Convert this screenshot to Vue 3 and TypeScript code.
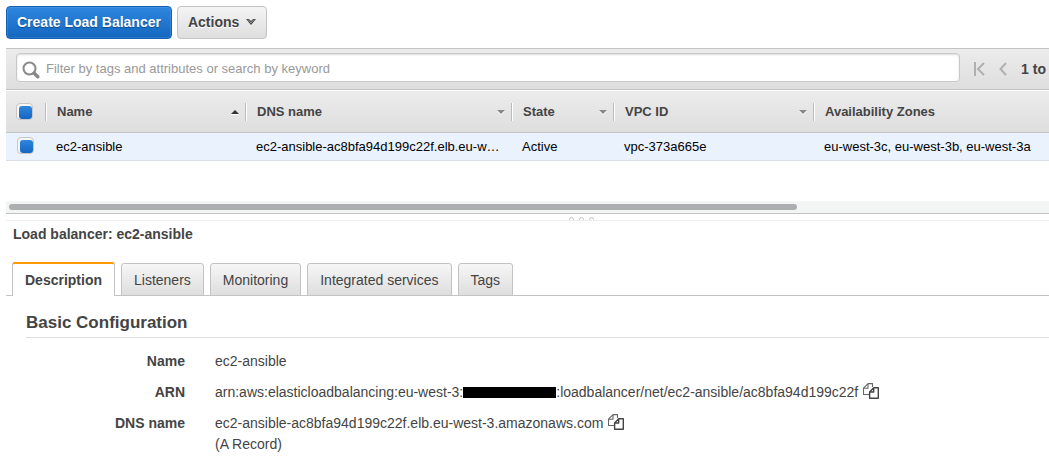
<script setup lang="ts">
import { ref } from 'vue'

interface Column {
  key: string
  label: string
  sort: 'asc' | 'none' | null
}

const columns: Column[] = [
  { key: 'name', label: 'Name', sort: 'asc' },
  { key: 'dns', label: 'DNS name', sort: 'none' },
  { key: 'state', label: 'State', sort: 'none' },
  { key: 'vpc', label: 'VPC ID', sort: 'none' },
  { key: 'zones', label: 'Availability Zones', sort: null },
]

const rows: Record<string, string>[] = [
  {
    name: 'ec2-ansible',
    dns: 'ec2-ansible-ac8bfa94d199c22f.elb.eu-w…',
    state: 'Active',
    vpc: 'vpc-373a665e',
    zones: 'eu-west-3c, eu-west-3b, eu-west-3a',
  },
]

const tabs: string[] = ['Description', 'Listeners', 'Monitoring', 'Integrated services', 'Tags']
const activeTab = ref<string>('Description')
const filter = ref<string>('')
const allSelected = ref<boolean>(true)
const selected = ref<boolean>(true)
</script>

<template>
  <main class="console">
    <div class="toolbar">
      <button type="button" class="btn primary">Create Load Balancer</button>
      <button type="button" class="btn">
        Actions
        <svg class="caret" width="10" height="7" viewBox="0 0 10 7" aria-hidden="true">
          <path d="M0 0h3l2 2 2-2h3L5 6z" fill="#444" />
          <path d="M2 .5L5 4l3-3.500" fill="none" stroke="#999" stroke-width="1" />
        </svg>
      </button>
    </div>

    <div class="filterbar">
      <label class="search">
        <svg width="18" height="18" viewBox="0 0 18 18" aria-hidden="true">
          <circle cx="7.5" cy="7.5" r="6" fill="none" stroke="#888" stroke-width="2" />
          <path d="M12 12l3.800 3.800" stroke="#888" stroke-width="3.400" stroke-linecap="round" />
        </svg>
        <input
          v-model="filter"
          type="text"
          aria-label="Filter load balancers"
          placeholder="Filter by tags and attributes or search by keyword"
        />
      </label>
      <nav class="pager" aria-label="Pages">
        <button type="button" aria-label="First page">
          <svg width="11" height="14" viewBox="0 0 11 14">
            <path d="M1 0v14M10 1L4 7l6 6" fill="none" stroke="#b0b0b0" stroke-width="2" />
          </svg>
        </button>
        <button type="button" aria-label="Previous page">
          <svg width="8" height="14" viewBox="0 0 8 14">
            <path d="M7 1L1.500 7L7 13" fill="none" stroke="#b0b0b0" stroke-width="2" />
          </svg>
        </button>
        <span class="range">1 to</span>
      </nav>
    </div>

    <div class="grid">
      <table>
        <colgroup>
          <col class="c-check" />
          <col class="c-name" />
          <col class="c-dns" />
          <col class="c-state" />
          <col class="c-vpc" />
          <col />
        </colgroup>
        <thead>
          <tr>
            <th class="check">
              <input v-model="allSelected" type="checkbox" aria-label="Select all" />
            </th>
            <th v-for="col in columns" :key="col.key" scope="col">
              <div class="head">
                {{ col.label }}
                <svg v-if="col.sort === 'asc'" width="8" height="6" viewBox="0 0 8 6" aria-hidden="true">
                  <path d="M0 5h8v1H0z" fill="#fff" />
                  <path d="M0 5l4-4 4 4z" fill="#333" />
                </svg>
                <svg v-else-if="col.sort" width="8" height="6" viewBox="0 0 8 6" aria-hidden="true">
                  <path d="M0 2l4 4 4-4z" fill="#fff" />
                  <path d="M0 1h8L4 5z" fill="#888" />
                </svg>
              </div>
            </th>
          </tr>
        </thead>
        <tbody>
          <tr v-for="row in rows" :key="row.name">
            <td class="check">
              <input v-model="selected" type="checkbox" :aria-label="'Select ' + row.name" />
            </td>
            <td v-for="col in columns" :key="col.key">{{ row[col.key] }}</td>
          </tr>
        </tbody>
      </table>
    </div>
    <div class="track"><div class="thumb"></div></div>

    <div class="splitter"><i></i><i></i><i></i></div>

    <h1>Load balancer: ec2-ansible</h1>

    <div class="tabs" role="tablist">
      <button
        v-for="tab in tabs"
        :key="tab"
        type="button"
        role="tab"
        :aria-selected="tab === activeTab"
        :class="{ active: tab === activeTab }"
        @click="activeTab = tab"
      >
        {{ tab }}
      </button>
    </div>

    <section class="panel">
      <h2>Basic Configuration</h2>
      <dl>
        <dt>Name</dt>
        <dd>ec2-ansible</dd>
        <dt>ARN</dt>
        <dd>
          <span>arn:aws:elasticloadbalancing:eu-west-3:</span><span class="redacted"></span
          ><span>:loadbalancer/net/ec2-ansible/ac8bfa94d199c22f</span>
          <button type="button" class="copy" aria-label="Copy ARN">
            <svg width="16" height="16" viewBox="0 0 16 16">
              <g fill="none" stroke-linejoin="round">
                <path d="M6 11.500H.5V5.200L5 .6h4.500V4M.5 5.300H5V.6" stroke="#666" stroke-width="1.100" />
                <path d="M6.600 15.300h8.700V4.700h-4.600L6.600 9zM6.600 9h4.100V4.700" stroke="#444" stroke-width="1.400" />
              </g>
            </svg>
          </button>
        </dd>
        <dt>DNS name</dt>
        <dd>
          <span>ec2-ansible-ac8bfa94d199c22f.elb.eu-west-3.amazonaws.com</span>
          <button type="button" class="copy" aria-label="Copy DNS name">
            <svg width="16" height="16" viewBox="0 0 16 16">
              <g fill="none" stroke-linejoin="round">
                <path d="M6 11.500H.5V5.200L5 .6h4.500V4M.5 5.300H5V.6" stroke="#666" stroke-width="1.100" />
                <path d="M6.600 15.300h8.700V4.700h-4.600L6.600 9zM6.600 9h4.100V4.700" stroke="#444" stroke-width="1.400" />
              </g>
            </svg>
          </button>
          <span class="note">(A Record)</span>
        </dd>
      </dl>
    </section>
  </main>
</template>

<style>
body {
  margin: 0;
  background: #fff;
}
</style>

<style scoped>
.console {
  padding: 6px 0 0 6px;
  overflow: hidden;
  color: #444;
  font: 14px/21px "Liberation Sans", Arial, sans-serif;
}

button,
input {
  font: inherit;
  color: inherit;
  margin: 0;
}

button {
  cursor: pointer;
}

.toolbar {
  display: flex;
  gap: 5px;
  margin-bottom: 9px;
}

.btn {
  display: flex;
  align-items: center;
  gap: 7px;
  height: 33px;
  padding: 0 10px;
  border: 1px solid #c3c3c3;
  border-radius: 4px;
  background: linear-gradient(#f4f4f4, #dedede);
  font-weight: bold;
  text-shadow: 0 1px 0 #fff;
}

.primary {
  border-color: #1160b4;
  background: linear-gradient(#2e86de, #1467c0);
  box-shadow: inset 0 0 0 1px rgba(255, 255, 255, 0.1);
  color: #fff;
  text-shadow: 0 1px 1px #0b4a8d;
}

.filterbar {
  display: flex;
  align-items: center;
  padding: 4px 0 7px 10px;
  border-top: 1px solid #c3c3c3;
  border-bottom: 1px solid #c3c3c3;
  background: linear-gradient(#ececec, #dedede);
}

.search {
  display: flex;
  flex: 1;
  align-items: center;
  gap: 6px;
  height: 27px;
  padding: 0 5px;
  border: 1px solid #c8c8c8;
  border-radius: 4px;
  background: #fff;
  box-shadow: inset 0 1px 2px #ddd;
}

.search svg {
  flex: none;
  margin-top: 4px;
}

.search input {
  flex: 1;
  min-width: 0;
  padding: 2px 0 0;
  border: 0;
  outline: 0;
  background: none;
  font-size: 13px;
}

.search input::placeholder {
  color: #999;
  opacity: 1;
}

.pager {
  display: flex;
  align-items: center;
  gap: 14px;
  padding: 3px 3px 0 14px;
  white-space: nowrap;
}

.pager button {
  display: flex;
  padding: 0;
  border: 0;
  background: none;
}

.range {
  font-weight: bold;
}

.grid {
  height: 111px;
  overflow: hidden;
}

table {
  width: 100%;
  border-collapse: separate;
  border-spacing: 0;
  table-layout: fixed;
  font-size: 13px;
}

.c-check {
  width: 39px;
}

.c-name,
.c-vpc {
  width: 200px;
}

.c-dns {
  width: 266px;
}

.c-state {
  width: 102px;
}

thead tr {
  background: linear-gradient(#ececec, #dedede);
}

th {
  height: 41px;
  padding: 0;
  border-top: 1px solid #fff;
  border-bottom: 1px solid #c3c3c3;
  text-align: left;
}

.head {
  display: flex;
  align-items: center;
  justify-content: space-between;
  height: 18px;
  padding: 0 6px 0 11px;
  border-left: 1px solid #bbb;
  box-shadow: inset 1px 0 #fff;
}

td {
  height: 27px;
  padding: 0 10px 0 11px;
  border-bottom: 1px solid #dadfe6;
  background: #eaf2fe;
  color: #000;
  overflow: hidden;
  line-height: 20px;
  text-overflow: ellipsis;
  white-space: nowrap;
}

th.check {
  padding: 0 0 0 10px;
}

td.check {
  padding: 0 0 0 11px;
}

.check input {
  display: block;
  box-sizing: border-box;
  width: 17px;
  height: 17px;
  padding: 2px 0 0 2px;
  border: 1px solid #c6c6c6;
  border-radius: 4px;
  appearance: none;
  background: #f6f6f6;
}

td.check input {
  margin-bottom: 2px;
}

.check input:checked::before {
  content: "";
  display: block;
  width: 13px;
  height: 13px;
  border-radius: 3px;
  background: linear-gradient(#2e86de, #1467c0);
}

.track {
  padding: 3px;
  border-bottom: 1px solid #c3c3c3;
  background: #f3f5f5;
}

.thumb {
  width: 76%;
  height: 6px;
  border-radius: 3px;
  background: #adaeaf;
}

.splitter {
  display: flex;
  gap: 5px;
  height: 3px;
  margin-top: 3px;
  padding-left: 54%;
  overflow: hidden;
  border-bottom: 1px solid #eee;
}

.splitter i {
  box-sizing: border-box;
  width: 5px;
  height: 5px;
  border: 1px solid #c3c3c3;
  border-radius: 50%;
}

h1 {
  margin: 3px 0 17px;
  padding-left: 7px;
  font-size: 14px;
  line-height: 21px;
}

.tabs {
  display: flex;
  align-items: flex-end;
  gap: 6px;
  padding-left: 6px;
  box-shadow: inset 0 -1px #c3c3c3;
}

.tabs button {
  height: 33px;
  padding: 2px 12px 0;
  border: 1px solid #c3c3c3;
  border-radius: 3px 3px 0 0;
  background: linear-gradient(#f6f6f6, #dedede);
}

.tabs .active {
  height: 34px;
  padding-top: 0;
  border-top: 2px solid #f90;
  border-bottom: 0;
  background: #fff;
  font-weight: bold;
}

.panel {
  padding: 16px 0 4px 20px;
}

h2 {
  margin: 0 0 13px;
  padding-bottom: 3px;
  border-bottom: 1px solid #ddd;
  font-size: 17px;
  line-height: 22px;
}

dl {
  display: grid;
  grid-template-columns: 159px 1fr;
  gap: 10px 30px;
  margin: 0;
}

dt {
  font-weight: bold;
  text-align: right;
}

dd {
  display: flex;
  flex-wrap: wrap;
  align-items: center;
  margin: 0;
}

.redacted {
  width: 93px;
  height: 11px;
  background: #000;
}

.copy {
  display: flex;
  margin: 0 0 3px 5px;
  padding: 0;
  border: 0;
  background: none;
}

.note {
  flex-basis: 100%;
}
</style>
